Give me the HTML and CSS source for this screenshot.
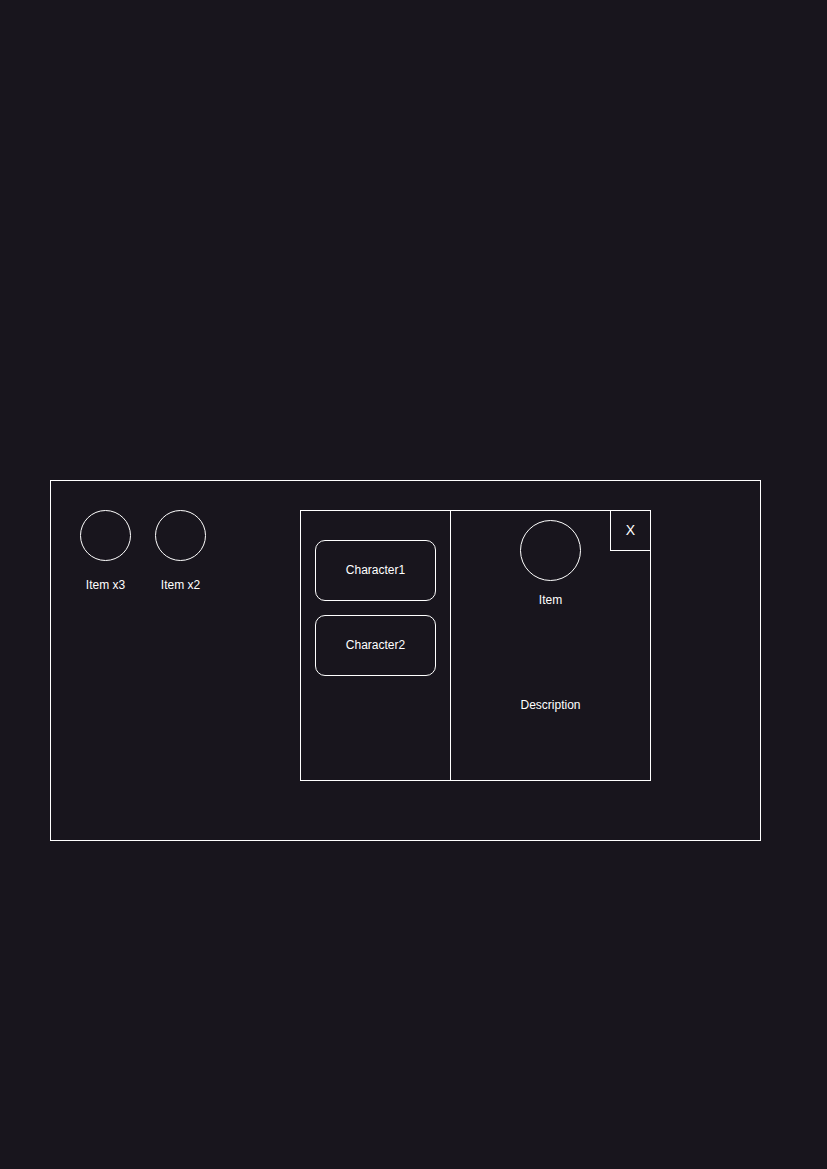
FILE: index.html
```html
<!DOCTYPE html>
<html lang="en">
<head>
  <meta charset="UTF-8">
  <meta name="viewport" content="width=device-width, initial-scale=1.0">
  <title>Inventory</title>
  <link rel="stylesheet" href="styles.css">
</head>
<body>
  <div class="inventory">
    <div class="items">
      <div class="item">
        <div class="item-icon"></div>
        <span class="item-label">Item x3</span>
      </div>
      <div class="item">
        <div class="item-icon"></div>
        <span class="item-label">Item x2</span>
      </div>
    </div>

    <div class="modal">
      <div class="characters">
        <button class="character">Character1</button>
        <button class="character">Character2</button>
      </div>
      <div class="details">
        <div class="detail-icon"></div>
        <span class="detail-name">Item</span>
        <p class="description">Description</p>
      </div>
      <button class="close">X</button>
    </div>
  </div>
</body>
</html>
```

FILE: styles.css
```css
* {
  margin: 0;
  padding: 0;
  box-sizing: border-box;
}

body {
  font-family: 'Liberation Sans', Arial, sans-serif;
  font-size: 12px;
  color: #fff;
  background: #18151d;
  min-height: 100vh;
  padding: 480px 0 0 50px;
}

.inventory {
  width: 711px;
  height: 361px;
  border: 1px solid #fff;
  padding: 29px;
  display: flex;
  align-items: flex-start;
}

.items {
  display: flex;
  gap: 24px;
}

.item {
  display: flex;
  flex-direction: column;
  align-items: center;
  width: 51px;
}

.item-icon {
  width: 51px;
  height: 51px;
  border: 1px solid #fff;
  border-radius: 50%;
}

.item-label {
  margin-top: 17px;
  line-height: 14px;
  white-space: nowrap;
}

.modal {
  position: relative;
  margin-left: 94px;
  width: 351px;
  height: 271px;
  border: 1px solid #fff;
  display: flex;
}

.characters {
  width: 150px;
  border-right: 1px solid #fff;
  padding: 29px 14px;
  display: flex;
  flex-direction: column;
  gap: 14px;
}

.character {
  width: 121px;
  height: 61px;
  border: 1px solid #fff;
  border-radius: 10px;
  background: transparent;
  color: #fff;
  font-family: inherit;
  font-size: 12px;
  padding: 0 0 2px 0;
}

.details {
  flex: 1;
  display: flex;
  flex-direction: column;
  align-items: center;
  padding-top: 9px;
}

.detail-icon {
  width: 61px;
  height: 61px;
  border: 1px solid #fff;
  border-radius: 50%;
}

.detail-name {
  margin-top: 12px;
  line-height: 14px;
}

.description {
  margin-top: 91px;
  line-height: 14px;
}

.close {
  position: absolute;
  top: -1px;
  right: -1px;
  width: 41px;
  height: 41px;
  border: 1px solid #fff;
  background: transparent;
  color: #fff;
  font-family: inherit;
  font-size: 14px;
  padding: 0 0 2px 0;
}
```
